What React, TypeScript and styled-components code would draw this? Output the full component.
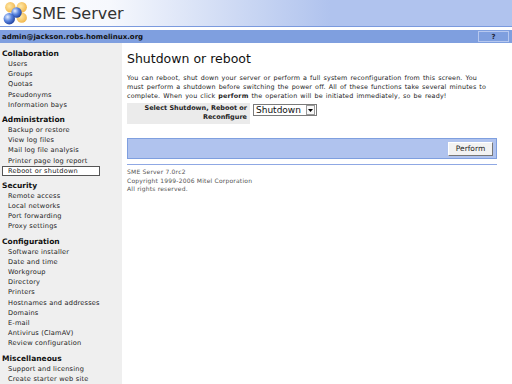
import React from "react";
import styled, { createGlobalStyle } from "styled-components";

const Global = createGlobalStyle`
  html, body { margin:0; padding:0; background:#fff; overflow:hidden; }
  body { font-family:"DejaVu Sans", Verdana, sans-serif; color:#000; }
`;

const Page = styled.div`
  width:512px;
  height:384px;
  display:flex;
  flex-direction:column;
`;

const Header = styled.div`
  height:26px;
  display:flex;
  align-items:center;
  gap:3px;
  padding-left:2px;
  background:linear-gradient(to right, #ffffff 0px, #f6f8fd 110px, #c9d6f3 250px, #b0c3ee 330px, #b0c3ee 100%);
  border-bottom:1px solid #7b9ade;
`;

const Brand = styled.div`
  font-family:"DejaVu Sans", Verdana, sans-serif;
  font-size:16px;
  color:#333;
`;

const StatusBar = styled.div`
  margin-top:3px;
  height:13px;
  background:#7f9fdf;
  display:flex;
  align-items:center;
  justify-content:space-between;
  padding:0 3px 0 2px;
`;

const User = styled.span`
  font-size:7px;
  font-weight:bold;
  color:#111;
`;

const HelpBtn = styled.span`
  width:29px;
  height:9px;
  border:1px solid #b7c8ef;
  font-size:7px;
  font-weight:bold;
  color:#223;
  display:flex;
  align-items:center;
  justify-content:center;
`;

const Body = styled.div`
  flex:1;
  display:flex;
  min-height:0;
`;

const Nav = styled.div`
  width:122px;
  background:#efefef;
  padding-top:5px;
  display:flex;
  flex-direction:column;
`;

const Section = styled.div<{ first?: boolean }>`
  font-size:7.5px;
  font-weight:bold;
  color:#111;
  height:11px;
  line-height:11px;
  padding-left:2px;
  margin-top:${(p) => (p.first ? "0" : "4px")};
`;

const Item = styled.div<{ active?: boolean }>`
  font-size:6.6px;
  color:#222;
  height:10.2px;
  line-height:10px;
  padding-left:${(p) => (p.active ? "5px" : "8px")};
  box-sizing:border-box;
  letter-spacing:0.2px;
  ${(p) =>
    p.active &&
    `
    background:#fff;
    border:1px solid #555;
    margin:0 22px 0 2px;
    line-height:8px;
  `}
`;

const Main = styled.div`
  flex:1;
  padding:8px 15px 0 5px;
  display:flex;
  flex-direction:column;
`;

const Title = styled.div`
  font-size:12.5px;
  color:#111;
  margin:0 0 8px 0;
`;

const Para = styled.p`
  margin:0 0 2px 0;
  font-size:6.4px;
  line-height:9px;
  color:#222;
  letter-spacing:0.15px;
  word-spacing:0.8px;
  white-space:nowrap;
`;

const FormRow = styled.div`
  display:flex;
  align-items:flex-start;
  gap:3px;
`;

const Label = styled.div`
  width:120px;
  height:20px;
  padding:1px 3px 0 0;
  background:#ebebeb;
  font-size:6.5px;
  font-weight:bold;
  text-align:right;
  line-height:8.5px;
  color:#222;
  white-space:nowrap;
`;

const Select = styled.div`
  width:64px;
  height:12px;
  margin-top:1px;
  border:1px solid #7a7a7a;
  background:#fff;
  display:flex;
  align-items:center;
  justify-content:space-between;
  font-size:9px;
  color:#111;
  padding-left:2px;
  box-sizing:border-box;
`;

const Arrow = styled.span`
  width:9px;
  height:10px;
  margin-right:1px;
  background:#f8f8f8;
  border:1px solid #999;
  box-sizing:border-box;
  display:flex;
  align-items:center;
  justify-content:center;
`;

const ActionBar = styled.div`
  margin-top:14px;
  height:19px;
  background:#b0c3ee;
  border:1px solid #7f9fdf;
  display:flex;
  align-items:center;
  justify-content:flex-end;
  padding-right:3px;
`;

const Button = styled.button`
  height:14px;
  width:45px;
  padding:0;
  font-family:"DejaVu Sans", Verdana, sans-serif;
  font-size:7.5px;
  color:#222;
  background:#f2f2f2;
  border:1px solid;
  border-color:#fff #777 #777 #fff;
`;

const Rule = styled.div`
  margin-top:5px;
  height:1px;
  background:#8fa8e4;
`;

const Footer = styled.div`
  margin-top:3px;
  font-size:6px;
  line-height:8.5px;
  color:#555;
  letter-spacing:0.2px;
`;

const nav: [string, string[]][] = [
  ["Collaboration", ["Users", "Groups", "Quotas", "Pseudonyms", "Information bays"]],
  ["Administration", ["Backup or restore", "View log files", "Mail log file analysis", "Printer page log report", "Reboot or shutdown"]],
  ["Security", ["Remote access", "Local networks", "Port forwarding", "Proxy settings"]],
  ["Configuration", ["Software installer", "Date and time", "Workgroup", "Directory", "Printers", "Hostnames and addresses", "Domains", "E-mail", "Antivirus (ClamAV)", "Review configuration"]],
  ["Miscellaneous", ["Support and licensing", "Create starter web site"]],
];

function Logo() {
  return (
    <svg width="27" height="25" viewBox="0 0 26 24">
      <defs>
        <radialGradient id="bl" cx="35%" cy="35%" r="70%">
          <stop offset="0" stopColor="#e6efff" />
          <stop offset="0.5" stopColor="#5b86e0" />
          <stop offset="1" stopColor="#1d3f9e" />
        </radialGradient>
        <radialGradient id="or" cx="40%" cy="40%" r="70%">
          <stop offset="0" stopColor="#ffe9a8" />
          <stop offset="1" stopColor="#f0b040" />
        </radialGradient>
      </defs>
      <circle cx="8" cy="6" r="5" fill="url(#or)" />
      <circle cx="19" cy="6" r="5" fill="url(#or)" />
      <circle cx="19" cy="16" r="5" fill="url(#or)" />
      <circle cx="14" cy="11" r="5" fill="url(#bl)" />
      <circle cx="7" cy="17" r="5.5" fill="url(#bl)" />
    </svg>
  );
}

export default function App() {
  return (
    <Page>
      <Global />
      <Header>
        <Logo />
        <Brand>SME Server</Brand>
      </Header>
      <StatusBar>
        <User>admin@jackson.robs.homelinux.org</User>
        <HelpBtn>?</HelpBtn>
      </StatusBar>
      <Body>
        <Nav>
          {nav.map(([sec, items], i) => (
            <React.Fragment key={sec}>
              <Section first={i === 0}>{sec}</Section>
              {items.map((it) => (
                <Item key={it} active={it === "Reboot or shutdown"}>
                  {it}
                </Item>
              ))}
            </React.Fragment>
          ))}
        </Nav>
        <Main>
          <Title>Shutdown or reboot</Title>
          <Para>
            You can reboot, shut down your server or perform a full system reconfiguration from this screen. You
            <br />
            must perform a shutdown before switching the power off. All of these functions take several minutes to
            <br />
            complete. When you click <b>perform</b> the operation will be initiated immediately, so be ready!
          </Para>
          <FormRow>
            <Label>
              Select Shutdown, Reboot or
              <br />
              Reconfigure
            </Label>
            <Select>
              Shutdown
              <Arrow>
                <svg width="5" height="3" viewBox="0 0 5 3">
                  <path d="M0 0h5L2.5 3z" fill="#000" />
                </svg>
              </Arrow>
            </Select>
          </FormRow>
          <ActionBar>
            <Button>Perform</Button>
          </ActionBar>
          <Rule />
          <Footer>
            SME Server 7.0rc2
            <br />
            Copyright 1999-2006 Mitel Corporation
            <br />
            All rights reserved.
          </Footer>
        </Main>
      </Body>
    </Page>
  );
}
